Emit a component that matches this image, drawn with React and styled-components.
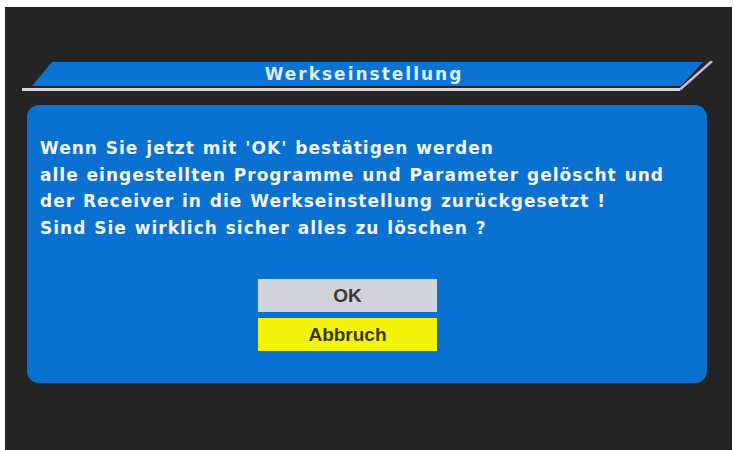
import React from "react";
import styled, { createGlobalStyle } from "styled-components";

const GlobalStyle = createGlobalStyle`
  html, body {
    margin: 0;
    padding: 0;
    background: #ffffff;
  }
`;

const S = {
  Screen: styled.div`
    margin: 7px 2px 0 5px;
    height: 443px;
    background: #242424;
    display: flex;
    flex-direction: column;
    padding-top: 54px;
    box-sizing: border-box;
    font-family: "DejaVu Sans", "Liberation Sans", sans-serif;
  `,
  TitleBar: styled.div`
    position: relative;
    height: 31px;
    margin: 0 19px 0 12px;
    display: flex;
    align-items: center;
    justify-content: center;
  `,
  TitleShape: styled.svg`
    position: absolute;
    inset: 0;
    width: 100%;
    height: 100%;
  `,
  Title: styled.span`
    position: relative;
    margin-top: -5px;
    margin-right: 2px;
    font-size: 17px;
    font-weight: bold;
    color: #dcf0ff;
    letter-spacing: 2px;
  `,
  Panel: styled.div`
    margin: 13px 25px 0 22px;
    height: 278px;
    background: #0b71d0;
    border-radius: 12px;
    padding: 30px 0 0 13px;
    box-sizing: border-box;
    display: flex;
    flex-direction: column;
  `,
  Message: styled.p`
    margin: 0;
    font-size: 17px;
    font-weight: bold;
    line-height: 26.5px;
    color: #f2f4f8;
    letter-spacing: 1px;
    word-spacing: 1px;
    white-space: nowrap;
  `,
  Buttons: styled.div`
    margin: 38px 0 0 218px;
    width: 179px;
    display: flex;
    flex-direction: column;
    gap: 6px;
  `,
  Button: styled.div`
    height: 33px;
    display: flex;
    align-items: center;
    justify-content: center;
    background: ${(p) => (p.active ? "#f2f20a" : "#d2d3da")};
    color: ${(p) => (p.active ? "#3a3a12" : "#383838")};
    font-family: "Liberation Sans", sans-serif;
    font-size: 19px;
    font-weight: bold;
  `,
};

export default function App() {
  return (
    <>
      <GlobalStyle />
      <S.Screen>
        <S.TitleBar>
          <S.TitleShape viewBox="0 0 696 31" preserveAspectRatio="none">
            <polygon points="35,1 686,1 664,25 15,25" fill="#0c73d2" />
            <line x1="5" y1="28.5" x2="663" y2="28.5" stroke="#d8d4dc" strokeWidth="3" />
            <line x1="663" y1="28.5" x2="695" y2="0" stroke="#c8b8e0" strokeWidth="2.5" />
          </S.TitleShape>
          <S.Title>Werkseinstellung</S.Title>
        </S.TitleBar>
        <S.Panel>
          <S.Message>
            Wenn Sie jetzt mit 'OK' bestätigen werden
            <br />
            alle eingestellten Programme und Parameter gelöscht und
            <br />
            der Receiver in die Werkseinstellung zurückgesetzt !
            <br />
            Sind Sie wirklich sicher alles zu löschen ?
          </S.Message>
          <S.Buttons>
            <S.Button>OK</S.Button>
            <S.Button active>Abbruch</S.Button>
          </S.Buttons>
        </S.Panel>
      </S.Screen>
    </>
  );
}
